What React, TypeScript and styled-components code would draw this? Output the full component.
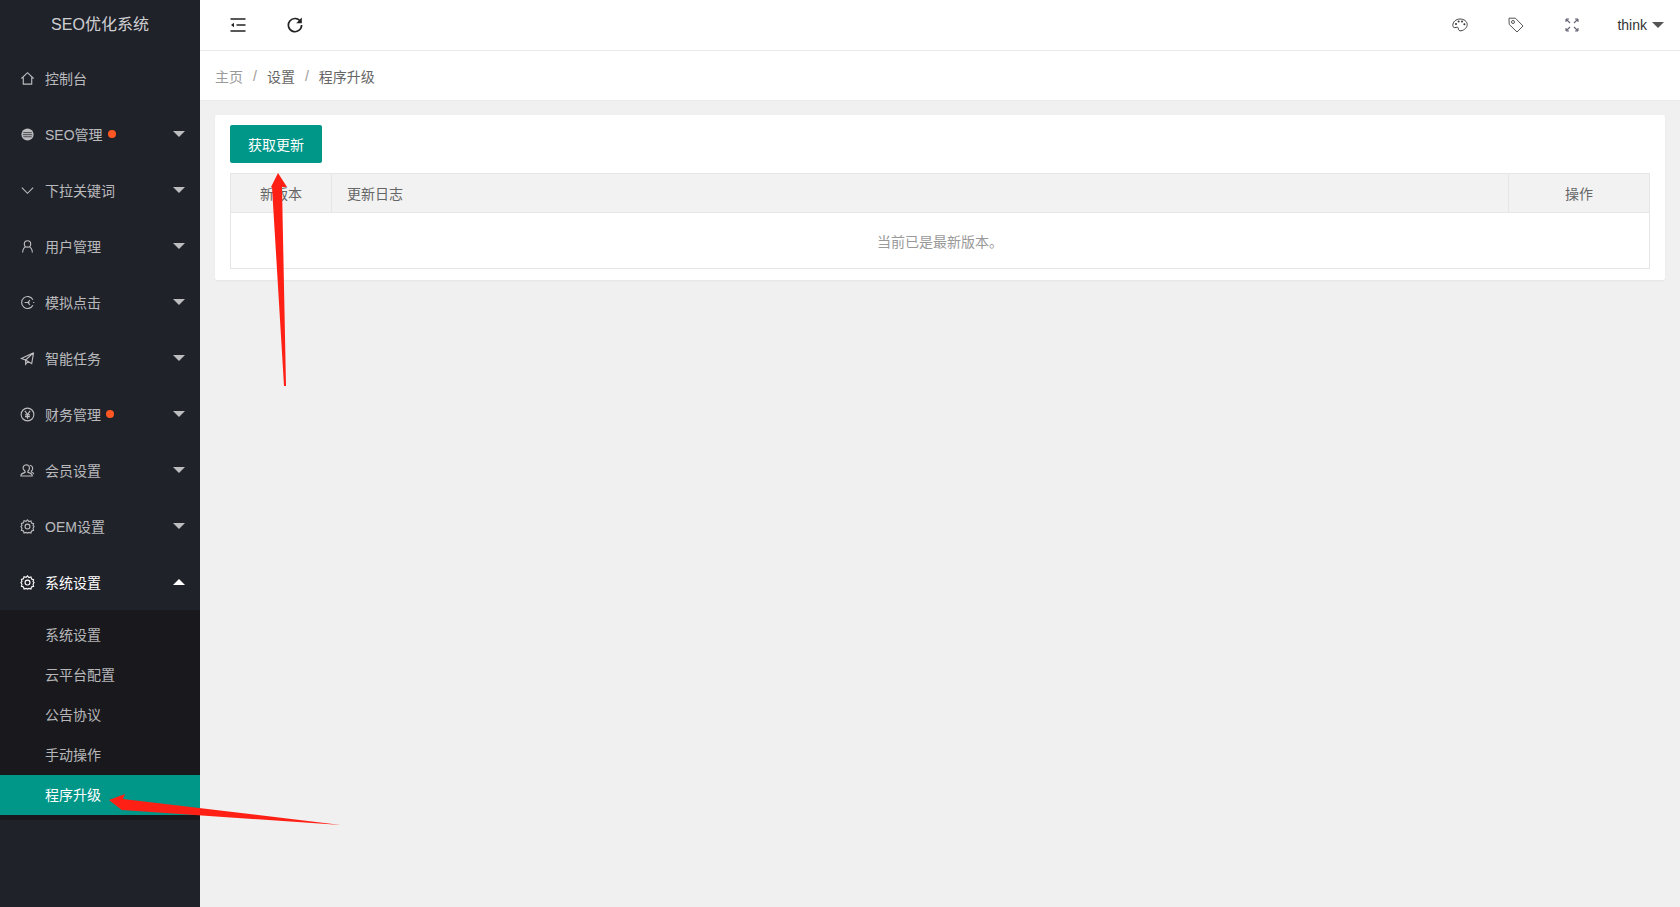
import React from 'react'
import styled, { createGlobalStyle } from 'styled-components'

const GlobalStyle = createGlobalStyle`
    html, body {
        margin: 0;
        padding: 0;
        height: 907px;
        overflow: hidden;
        background: #f0f0f0;
        font-family: "Liberation Sans", "Noto Sans CJK SC", sans-serif;
        font-size: 14px;
        color: #666;
    }
    * { box-sizing: border-box; }
`

const line = { fill: 'none', stroke: 'currentColor', strokeWidth: 1.2 }

const icons: Record<string, React.ReactNode> = {
    home: <path {...line} d="M1.5 8 8 1.8 14.5 8M3.5 7v7h9V7" />,
    seo: (
        <>
            <circle cx="8" cy="8" r="6.5" fill="currentColor" />
            <path d="M3.5 6h9M3 8.2h10M3.5 10.4h9" stroke="#20222a" strokeWidth="0.8" />
        </>
    ),
    down: <path {...line} d="M2 5l6 6 6-6" />,
    user: <path {...line} d="M8 1.8a3.4 3.4 0 1 1 0 6.8 3.4 3.4 0 0 1 0-6.8zM2.8 14.5c0-3.4 2-5.9 3.2-6.3M13.2 14.5c0-3.4-2-5.9-3.2-6.3" />,
    click: <path {...line} d="M13.8 5A6.4 6.4 0 1 0 13.8 11M5 8h5M10.5 5.5l-2 2.5 2 2.5M14 8h1.2" />,
    send: <path {...line} d="M14.5 1.8 1.5 8l4.5 1.6 8.5-7.8zM14.5 1.8 12.5 13.5 6 9.6v4.6l2.5-3" />,
    yen: (
        <>
            <circle {...line} cx="8" cy="8" r="6.8" />
            <path {...line} d="M5.2 4.2 8 8l2.8-3.8M8 8v4.4M5.4 8.4h5.2M5.4 10.2h5.2" />
        </>
    ),
    member: <path {...line} d="M6.5 1.8a3.6 3.6 0 0 1 3.5 4.4c-.3 1.3-1 2-1.6 2.6v1.2c2.8.8 4.6 1.6 4.6 3v.8H1v-.8c0-1.4 1.8-2.2 4.4-3V8.8C4.6 8 3.8 7 3.3 5.6A3.5 3.5 0 0 1 6.5 1.8zM10.5 2.4a3.4 3.4 0 0 1 2.5 5.2l-.9 1.2v.8c1.5.6 2.6 1.2 2.6 2.4" />,
    gear: (
        <>
            <path {...line} d="M8 1l1.5 1.7 2.2-.6.6 2.2 2.2.6-.6 2.2L15 8l-1.1 1.9.6 2.2-2.2.6-.6 2.2-2.2-.6L8 15l-1.5-.7-2.2.6-.6-2.2-2.2-.6.6-2.2L1 8l1.1-1.1-.6-2.2 2.2-.6.6-2.2 2.2.6z" />
            <circle {...line} cx="8" cy="8" r="2.6" />
        </>
    ),
}

const menu = [
    { icon: 'home', label: '控制台' },
    { icon: 'seo', label: 'SEO管理', dot: true, more: true },
    { icon: 'down', label: '下拉关键词', more: true },
    { icon: 'user', label: '用户管理', more: true },
    { icon: 'click', label: '模拟点击', more: true },
    { icon: 'send', label: '智能任务', more: true },
    { icon: 'yen', label: '财务管理', dot: true, more: true },
    { icon: 'member', label: '会员设置', more: true },
    { icon: 'gear', label: 'OEM设置', more: true },
]

const subMenu = ['系统设置', '云平台配置', '公告协议', '手动操作', '程序升级']

export default function App() {
    return (
        <Page>
            <GlobalStyle />
            <Sidebar>
                <Logo>SEO优化系统</Logo>
                {menu.map(m => (
                    <MenuItem key={m.label}>
                        <MenuIcon viewBox="0 0 16 16">{icons[m.icon]}</MenuIcon>
                        {m.label}
                        {m.dot && <Dot />}
                        {m.more && <Caret />}
                    </MenuItem>
                ))}
                <MenuItem $open>
                    <MenuIcon viewBox="0 0 16 16">{icons.gear}</MenuIcon>
                    系统设置
                    <Caret $up />
                </MenuItem>
                <SubMenu>
                    {subMenu.map((s, i) => (
                        <SubItem key={s} $active={i === subMenu.length - 1}>{s}</SubItem>
                    ))}
                </SubMenu>
            </Sidebar>
            <Main>
                <TopBar>
                    <ToolIcon viewBox="0 0 16 16" $left>
                        <path d="M0.5 2h15M6.5 8h9M0.5 14h15" stroke="#222" strokeWidth="1.5" fill="none" />
                        <path d="M1 8l3-2.2v4.4z" fill="#222" />
                    </ToolIcon>
                    <ToolIcon viewBox="0 0 16 16" $left>
                        <path d="M13.6 4.6A6.6 6.6 0 1 0 14.6 8" stroke="#222" strokeWidth="1.7" fill="none" />
                        <path d="M14.8 0.6v5.6H9.2z" fill="#222" />
                    </ToolIcon>
                    <Spacer />
                    <RightIcon viewBox="0 0 16 16">
                        <path d="M8 2C3.8 2 .8 5 .8 8.4c0 2.2 1.6 2.6 3.2 2 1.4-.5 2.6 0 2.4 1.4-.2 1.4 1 2.2 2.6 2 3.4-.6 6.2-3.2 6.2-6.2C15.2 4.4 12 2 8 2z" stroke="#444" fill="none" />
                        <circle cx="4" cy="7" r="1" fill="#333" />
                        <circle cx="6.6" cy="4.6" r="1" fill="#333" />
                        <circle cx="10" cy="4.6" r="1" fill="#333" />
                        <circle cx="12.4" cy="7.2" r="1" fill="#333" />
                    </RightIcon>
                    <RightIcon viewBox="0 0 16 16">
                        <path d="M1 1.2h6.4l7.6 7.8-6 6-7.8-7.6z" stroke="#555" fill="none" />
                        <circle cx="5" cy="5" r="1.5" stroke="#555" fill="none" />
                    </RightIcon>
                    <RightIcon viewBox="0 0 16 16">
                        <path d="M2 2l4 4M2 2h3M2 2v3M14 2l-4 4M14 2h-3M14 2v3M2 14l4-4M2 14h3M2 14v-3M14 14l-4-4M14 14h-3M14 14v-3" stroke="#667" strokeWidth="1.1" fill="none" />
                    </RightIcon>
                    <UserName>think<UserCaret /></UserName>
                </TopBar>
                <Crumbs>
                    <CrumbFirst>主页</CrumbFirst>
                    <CrumbSep>/</CrumbSep>
                    <span>设置</span>
                    <CrumbSep>/</CrumbSep>
                    <span>程序升级</span>
                </Crumbs>
                <Content>
                    <Card>
                        <PrimaryButton>获取更新</PrimaryButton>
                        <Table>
                            <thead>
                                <tr>
                                    <HeadCell $width={101} $center>新版本</HeadCell>
                                    <HeadCell>更新日志</HeadCell>
                                    <HeadCell $width={141} $center>操作</HeadCell>
                                </tr>
                            </thead>
                            <tbody>
                                <tr>
                                    <EmptyCell colSpan={3}>当前已是最新版本。</EmptyCell>
                                </tr>
                            </tbody>
                        </Table>
                    </Card>
                </Content>
            </Main>
            <Arrows viewBox="0 0 1680 907">
                <polygon fill="#ff2015" points="278,173 287,187 282,187 286,386 284,386 272,187 271,187" />
                <polygon fill="#ff2015" points="109,800 125,794 123,799 341,825 122,810 123,811" />
            </Arrows>
        </Page>
    )
}

const Page = styled.div`
    display: flex;
    position: relative;
    width: 1680px;
    height: 907px;
    overflow: hidden;
`

const Sidebar = styled.aside`
    width: 200px;
    flex: none;
    background: #20222a;
    color: rgba(255, 255, 255, 0.7);
`

const Logo = styled.div`
    height: 50px;
    line-height: 50px;
    text-align: center;
    font-size: 16px;
    color: rgba(255, 255, 255, 0.8);
`

const MenuItem = styled.div<{ $open?: boolean }>`
    display: flex;
    align-items: center;
    height: 56px;
    padding-left: 20px;
    padding-right: 15px;
    color: ${p => (p.$open ? '#fff' : 'rgba(255, 255, 255, 0.7)')};
`

const MenuIcon = styled.svg`
    width: 15px;
    height: 15px;
    margin-right: 10px;
    flex: none;
`

const Dot = styled.span`
    width: 8px;
    height: 8px;
    margin-left: 5px;
    border-radius: 50%;
    background: #ff5722;
`

const Caret = styled.span<{ $up?: boolean }>`
    margin-left: auto;
    width: 0;
    height: 0;
    border-left: 6px solid transparent;
    border-right: 6px solid transparent;
    ${p => (p.$up ? 'border-bottom: 6px solid #fff;' : 'border-top: 6px solid rgba(255, 255, 255, 0.7);')}
`

const SubMenu = styled.div`
    padding: 5px 0;
    background: #18181d;
    border-radius: 2px;
`

const SubItem = styled.div<{ $active?: boolean }>`
    height: 40px;
    line-height: 40px;
    padding-left: 45px;
    color: ${p => (p.$active ? '#fff' : 'rgba(255, 255, 255, 0.7)')};
    background: ${p => (p.$active ? '#009688' : 'transparent')};
`

const Main = styled.main`
    flex: 1;
    min-width: 0;
`

const TopBar = styled.header`
    display: flex;
    align-items: center;
    height: 51px;
    padding: 0 16px 0 30px;
    background: #fff;
    border-bottom: 1px solid #ececec;
`

const ToolIcon = styled.svg<{ $left?: boolean }>`
    width: 16px;
    height: 16px;
    margin-right: 41px;
`

const Spacer = styled.div`
    flex: 1;
`

const RightIcon = styled.svg`
    width: 16px;
    height: 16px;
    margin-right: 40px;
`

const UserName = styled.div`
    display: flex;
    align-items: center;
    color: #333;
    margin-left: -3px;
`

const UserCaret = styled.span`
    width: 0;
    height: 0;
    margin-left: 5px;
    border-left: 6px solid transparent;
    border-right: 6px solid transparent;
    border-top: 6px solid #555;
`

const Crumbs = styled.nav`
    display: flex;
    align-items: center;
    height: 50px;
    padding-left: 15px;
    background: #fff;
    border-bottom: 1px solid #ececec;
    color: #666;
`

const CrumbFirst = styled.span`
    color: #999;
`

const CrumbSep = styled.span`
    margin: 0 10px;
    color: #999;
`

const Content = styled.div`
    padding: 14px 15px;
`

const Card = styled.section`
    height: 165px;
    padding: 10px 15px;
    background: #fff;
    border-radius: 2px;
    box-shadow: 0 1px 2px rgba(0, 0, 0, 0.05);
`

const PrimaryButton = styled.button`
    display: block;
    width: 92px;
    height: 38px;
    padding: 0;
    border: 0;
    border-radius: 2px;
    background: #009688;
    color: #fff;
    font: inherit;
`

const Table = styled.table`
    width: 100%;
    margin-top: 10px;
    border-collapse: collapse;
    table-layout: fixed;
    color: #666;
`

const HeadCell = styled.th<{ $width?: number; $center?: boolean }>`
    height: 39px;
    padding: 0 15px;
    ${p => (p.$width ? `width: ${p.$width}px;` : '')}
    border: 1px solid #e6e6e6;
    background: #f2f2f2;
    font-weight: 400;
    text-align: ${p => (p.$center ? 'center' : 'left')};
`

const EmptyCell = styled.td`
    height: 56px;
    border: 1px solid #e6e6e6;
    text-align: center;
    color: #999;
`

const Arrows = styled.svg`
    position: absolute;
    inset: 0;
    width: 1680px;
    height: 907px;
    pointer-events: none;
`
